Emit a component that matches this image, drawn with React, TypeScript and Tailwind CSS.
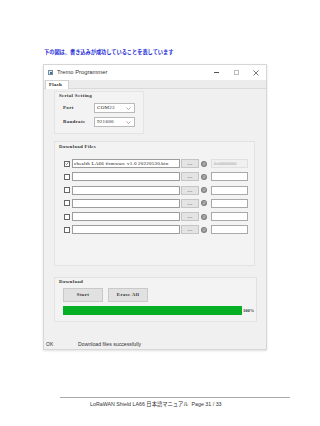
const serif = "font-['Liberation_Serif','Noto_Sans_CJK_SC',serif]";
const sans = "font-['Liberation_Sans','Noto_Sans_CJK_JP',sans-serif]";

const ComboBox = ({ value }: { value: string }) => (
  <div className="flex h-[10px] w-[41px] items-center justify-between border border-[#b9b9b9] bg-white pl-[2px] pr-[3px]">
    <span className="text-[5px] leading-[6px] tracking-[0.3px] text-[#222]">{value}</span>
    <svg width="5" height="3" viewBox="0 0 5 3">
      <path d="M0.5 0.5 L2.5 2.5 L4.5 0.5" fill="none" stroke="#777" strokeWidth="0.6" />
    </svg>
  </div>
);

interface FileRowProps {
  checked?: boolean;
  file?: string;
  address?: string;
}

const FileRow = ({ checked, file, address }: FileRowProps) => (
  <div className="flex h-[9px] items-center">
    <div className="flex h-[6px] w-[6px] items-center justify-center border border-[#666] bg-white">
      {checked && (
        <svg width="5" height="5" viewBox="0 0 5 5">
          <path d="M0.8 2.6 L2 3.8 L4.3 1" fill="none" stroke="#333" strokeWidth="0.7" />
        </svg>
      )}
    </div>
    <div className="ml-[2px] flex h-[9px] w-[108px] items-center overflow-hidden border border-[#9c9c9c] bg-white pl-[1px]">
      <span className="whitespace-nowrap text-[5px] leading-[6px] tracking-[0.22px] text-[#111]">{file}</span>
    </div>
    <div className="ml-[1px] flex h-[9px] w-[18px] items-center justify-center border border-[#c4c4c4] bg-[#e4e4e4]">
      <span className="text-[5px] font-bold leading-[5px] tracking-[0.5px] text-[#444]">...</span>
    </div>
    <div className="ml-[2px] flex h-[6px] w-[6px] items-center justify-center rounded-full bg-[#7d7d7d]">
      <span className="text-[4px] leading-[4px] text-[#e6e6e6]">@</span>
    </div>
    {address ? (
      <div className="ml-[4px] flex h-[9px] w-[37px] items-center border border-[#e0e0e0] bg-[#f0f0f0] pl-[2px]">
        <span className="text-[4.5px] leading-[5px] text-[#a0a0a0]">{address}</span>
      </div>
    ) : (
      <div className="ml-[4px] h-[9px] w-[37px] border border-[#a9a9a9] bg-white" />
    )}
  </div>
);

export default function App() {
  return (
    <div className={`flex h-[426px] w-[320px] flex-col bg-white ${sans}`}>
      <p className="ml-[44px] mt-[49px] text-[5.2px] font-bold leading-[6px] text-[#1c2bd6]">
        下の図は、書き込みが成功していることを表しています
      </p>

      <div className="ml-[43px] mt-[9px] flex h-[286px] w-[224px] flex-col border border-[#d6d6d6] bg-white shadow-[0_1px_2px_rgba(0,0,0,0.12)]">
        {/* title bar */}
        <div className="flex h-[15px] items-center">
          <div className="ml-[4px] flex h-[5px] w-[5px] items-center justify-center border border-[#7a8a9a] bg-[#dfe8f0]">
            <div className="h-[2px] w-[2px] bg-[#3a6fa8]" />
          </div>
          <span className="ml-[4px] text-[5.8px] leading-[7px] text-[#333]">Tremo Programmer</span>
          <div className="ml-auto flex">
            <div className="flex w-[20px] items-center justify-center">
              <div className="h-px w-[5px] bg-[#555]" />
            </div>
            <div className="flex w-[20px] items-center justify-center">
              <div className="h-[5px] w-[5px] border border-[#bbb]" />
            </div>
            <div className="flex w-[20px] items-center justify-center">
              <svg width="6" height="6" viewBox="0 0 6 6">
                <path d="M0.5 0.5 L5.5 5.5 M5.5 0.5 L0.5 5.5" stroke="#444" strokeWidth="0.7" />
              </svg>
            </div>
          </div>
        </div>

        {/* tab row */}
        <div className="flex h-[9px] border-b border-[#d9d9d9] bg-[#ececec]">
          <div className={`ml-[1px] flex h-[9px] w-[24px] items-center border border-b-0 border-[#d0d0d0] bg-white pl-[3px] ${serif}`}>
            <span className="text-[5px] font-bold leading-[6px] tracking-[0.3px] text-[#222]">Flash</span>
          </div>
        </div>

        {/* body */}
        <div className={`flex flex-1 flex-col bg-[#f0f0f0] ${serif}`}>
          {/* serial setting */}
          <div className="ml-[10px] mt-[2px] flex h-[43px] w-[90px] flex-col border border-[#e4e4e4] bg-[#f3f3f3] pl-[4px] pt-[1px]">
            <span className="text-[5px] font-bold leading-[6px] tracking-[0.3px] text-[#333]">Serial Setting</span>
            <div className="mt-[4px] flex items-center">
              <span className="w-[35px] pl-[4px] text-[5px] font-bold leading-[6px] tracking-[0.3px] text-[#333]">Port</span>
              <ComboBox value="COM23" />
            </div>
            <div className="mt-[4px] flex items-center">
              <span className="w-[35px] pl-[4px] text-[5px] font-bold leading-[6px] tracking-[0.3px] text-[#333]">Baudrate</span>
              <ComboBox value="921600" />
            </div>
          </div>

          {/* download files */}
          <div className="ml-[10px] mt-[7px] flex h-[125px] w-[201px] flex-col border border-[#e2e2e2] bg-[#f3f3f3] pt-[2px]">
            <span className="pl-[4px] text-[5px] font-bold leading-[6px] tracking-[0.3px] text-[#333]">Download Files</span>
            <div className="ml-[9px] mt-[9px] flex flex-col gap-[4.3px]">
              <FileRow checked file="chealth LA66 firmware v1.0 20220530.bin" address="0x00000000" />
              <FileRow />
              <FileRow />
              <FileRow />
              <FileRow />
              <FileRow />
            </div>
          </div>

          {/* download */}
          <div className="ml-[10px] mt-[11px] flex h-[45px] w-[203px] flex-col border border-[#e2e2e2] bg-[#f3f3f3] pt-[1px]">
            <span className="pl-[4px] text-[5px] font-bold leading-[6px] tracking-[0.3px] text-[#333]">Download</span>
            <div className="ml-[8px] mt-[3px] flex gap-[5px]">
              <div className="flex h-[14px] w-[40px] items-center justify-center border border-[#c9c9c9] bg-[#e1e1e1]">
                <span className="text-[5px] font-bold leading-[6px] tracking-[0.3px] text-[#333]">Start</span>
              </div>
              <div className="flex h-[14px] w-[40px] items-center justify-center border border-[#c9c9c9] bg-[#e1e1e1]">
                <span className="text-[5px] font-bold leading-[6px] tracking-[0.3px] text-[#333]">Erase All</span>
              </div>
            </div>
            <div className="ml-[8px] mt-[4px] flex items-center">
              <div className="h-[9px] w-[179px] bg-[#06b025]" />
              <span className="ml-[1px] text-[4.5px] font-bold leading-[6px] text-[#333]">100%</span>
            </div>
          </div>
        </div>

        {/* status bar */}
        <div className="flex h-[11px] items-center bg-[#f0f0f0]">
          <span className="w-[34px] pl-[2px] text-[5px] leading-[6px] text-[#333]">OK</span>
          <span className="text-[5.2px] leading-[6px] text-[#333]">Download files successfully</span>
        </div>
      </div>

      <div className="ml-[60px] mt-[47px] h-px w-[230px] bg-[#a8a8a8]" />
      <p className="ml-[90px] mt-[3px] text-[5.3px] leading-[6px] text-[#333]">
        LoRaWAN Shield LA66 日本語マニュアル&nbsp;&nbsp;Page 31 / 33
      </p>
    </div>
  );
}
